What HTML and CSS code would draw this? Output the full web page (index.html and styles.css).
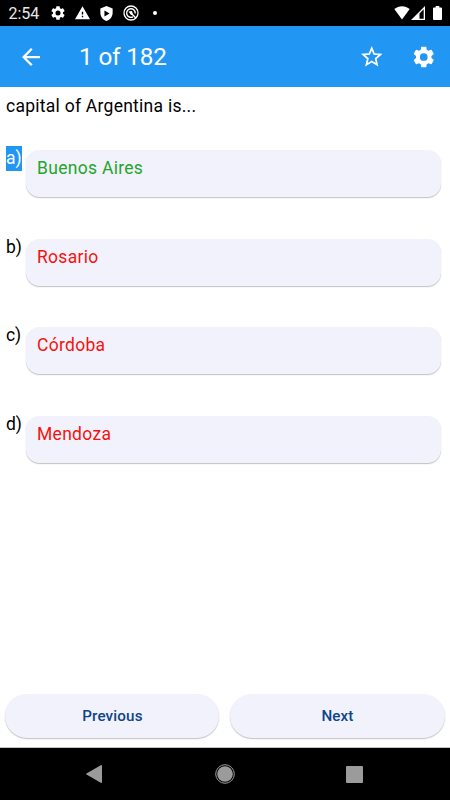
FILE: index.html
```html
<!DOCTYPE html>
<html lang="en">
<head>
<meta charset="utf-8">
<title>Quiz</title>
<link rel="stylesheet" href="styles.css">
</head>
<body>
<div class="screen">
  <div class="status">
    <span class="clock">2:54</span>
    <svg class="s-gear" viewBox="2 2 20 20"><path fill-rule="evenodd" d="M19.14 12.94c.04-.3.06-.61.06-.94 0-.32-.02-.64-.07-.94l2.03-1.58a.49.49 0 0 0 .12-.61l-1.92-3.32a.49.49 0 0 0-.59-.22l-2.39.96c-.5-.38-1.03-.7-1.62-.94l-.36-2.54a.48.48 0 0 0-.48-.41h-3.84c-.24 0-.43.17-.47.41l-.36 2.54c-.59.24-1.13.57-1.62.94l-2.39-.96a.48.48 0 0 0-.59.22L2.74 8.87c-.12.21-.08.47.12.61l2.03 1.58c-.05.3-.09.63-.09.94s.02.64.07.94l-2.03 1.58a.49.49 0 0 0-.12.61l1.92 3.32c.12.22.37.29.59.22l2.39-.96c.5.38 1.03.7 1.62.94l.36 2.54c.05.24.24.41.48.41h3.84c.24 0 .44-.17.47-.41l.36-2.54c.59-.24 1.13-.56 1.62-.94l2.39.96c.22.08.47 0 .59-.22l1.92-3.32a.49.49 0 0 0-.12-.61zM12 15.6A3.6 3.6 0 1 1 12 8.4a3.6 3.6 0 0 1 0 7.2z"/></svg>
    <svg class="s-warn" viewBox="1 2 22 19"><path fill-rule="evenodd" d="M1 21h22L12 2zm12-3h-2v-2h2zm0-4h-2v-4h2z"/></svg>
    <svg class="s-shield" viewBox="3 1 18 22"><path fill-rule="evenodd" d="M12 1 3 4.5V11c0 5.500 3.800 10.700 9 12 5.200-1.300 9-6.500 9-12V4.500zM9 7.500l7.500 4.500L9 16.500z"/></svg>
    <svg class="s-data" viewBox="0 0 16 16"><circle cx="8" cy="8" r="7" fill="none" stroke="#fff" stroke-width="1.300"/><path d="M10 11.800A4.300 4.300 0 1 1 12.200 8.500M7 7l5.800 6" fill="none" stroke="#fff" stroke-width="1.400"/><path d="M5.500 6.500 9 6l1 3.800-2 .2z"/></svg>
    <i class="dot"></i>
    <svg class="s-wifi" viewBox="0 0 16 14"><path d="M0 3.200C4.500-.8 11.500-.8 16 3.200L8 14z"/></svg>
    <svg class="s-cell" viewBox="0 0 14 14"><path fill-rule="evenodd" d="M14 0v14H0zM12.700 3.300 8.500 7.500v5.200h4.200z"/></svg>
    <svg class="s-batt" viewBox="0 0 9 14"><path d="M2.700 0h3.600v1.500H8q1 0 1 1V13q0 1-1 1H1q-1 0-1-1V2.500q0-1 1-1h1.700z"/></svg>
  </div>
  <header class="bar">
    <svg class="back" viewBox="4 4 16 16"><path d="M20 11H7.830l5.590-5.590L12 4l-8 8 8 8 1.410-1.410L7.830 13H20z"/></svg>
    <h1>1 of 182</h1>
    <svg class="star" viewBox="2 2 20 19"><path fill-rule="evenodd" d="m22 9.240-7.190-.62L12 2 9.190 8.630 2 9.240l5.460 4.730L5.820 21 12 17.270 18.180 21l-1.630-7.030zM12 15.400l-3.760 2.270 1-4.280-3.320-2.880 4.380-.38L12 6.100l1.710 4.040 4.380.38-3.320 2.880 1 4.280z"/></svg>
    <svg class="gear" viewBox="2 2 20 20"><path fill-rule="evenodd" d="M19.14 12.94c.04-.3.06-.61.06-.94 0-.32-.02-.64-.07-.94l2.03-1.58a.49.49 0 0 0 .12-.61l-1.92-3.32a.49.49 0 0 0-.59-.22l-2.39.96c-.5-.38-1.03-.7-1.62-.94l-.36-2.54a.48.48 0 0 0-.48-.41h-3.84c-.24 0-.43.17-.47.41l-.36 2.54c-.59.24-1.13.57-1.62.94l-2.39-.96a.48.48 0 0 0-.59.22L2.74 8.87c-.12.21-.08.47.12.61l2.03 1.58c-.05.3-.09.63-.09.94s.02.64.07.94l-2.03 1.58a.49.49 0 0 0-.12.61l1.92 3.32c.12.22.37.29.59.22l2.39-.96c.5.38 1.03.7 1.62.94l.36 2.54c.05.24.24.41.48.41h3.84c.24 0 .44-.17.47-.41l.36-2.54c.59-.24 1.13-.56 1.62-.94l2.39.96c.22.08.47 0 .59-.22l1.92-3.32a.49.49 0 0 0-.12-.61zM12 15.6A3.6 3.6 0 1 1 12 8.400a3.600 3.600 0 0 1 0 7.200z"/></svg>
  </header>
  <main class="quiz">
    <p class="question">capital of Argentina is...</p>
    <div class="option"><span class="letter picked">a)</span><div class="card right">Buenos Aires</div></div>
    <div class="option"><span class="letter">b)</span><div class="card">Rosario</div></div>
    <div class="option"><span class="letter">c)</span><div class="card">Córdoba</div></div>
    <div class="option"><span class="letter">d)</span><div class="card">Mendoza</div></div>
  </main>
  <div class="pager">
    <button>Previous</button>
    <button>Next</button>
  </div>
  <nav class="nav">
    <svg class="n-back" viewBox="0 0 16 18"><path d="M15.200 0q.8 0 .8.800v16.400q0 .8-.8.800L.5 9.600q-.9-.6 0-1.200z"/></svg>
    <svg class="n-home" viewBox="0 0 20 20"><circle cx="10" cy="10" r="9.300" fill="none" stroke="#9b9b9b"/><circle cx="10" cy="10" r="7.800"/></svg>
    <i class="n-recent"></i>
  </nav>
</div>
</body>
</html>
```
FILE: styles.css
```css
* { box-sizing: border-box; }
body { margin: 0; font-family: Roboto, "Liberation Sans", sans-serif; background: #fff; }
.screen { width: 450px; height: 800px; display: flex; flex-direction: column; overflow: hidden; }
svg { display: block; flex: none; fill: #fff; }

.status { height: 26px; flex: none; background: #000; color: #fff; display: flex; align-items: center; padding: 0 8px 0 8.500px; }
.clock { width: 42.500px; font-size: 16px; line-height: 26px; padding-top: 2px; color: #e8e8e8; }
.s-gear { width: 14px; height: 14px; margin-right: 9.500px; }
.s-warn { width: 15px; height: 13.500px; margin-right: 10px; }
.s-shield { width: 13px; height: 15px; margin-right: 10px; }
.s-data { width: 16px; height: 16px; margin-right: 14px; }
.dot { width: 4px; height: 4px; border-radius: 50%; background: #fff; margin-right: auto; }
.s-wifi { width: 16px; height: 13.500px; margin-right: 1px; }
.s-cell { width: 14px; height: 14px; margin-right: 8px; }
.s-batt { width: 9px; height: 14px; }

.bar { height: 61px; flex: none; background: #2196f3; color: #fff; display: flex; align-items: center; padding: 0 15.500px 0 22px; }
.back { width: 18px; height: 18px; }
.bar h1 { margin: 0 auto 0 39px; font-size: 24.300px; font-weight: 400; line-height: 60px; letter-spacing: -.15px; }
.star { width: 21.500px; height: 20.500px; margin-right: 31px; }
.gear { width: 21.500px; height: 22px; }

.quiz { flex: 1; padding: 9px 9.500px 0 6px; font-size: 17.500px; letter-spacing: .3px; line-height: 21px; }
.question { margin: 0 0 33px; color: #000; letter-spacing: .26px; }
.option { display: flex; align-items: flex-start; height: 88.500px; }
.letter { flex: none; width: 15.800px; margin-right: 4.200px; margin-top: -4px; line-height: 25px; letter-spacing: -.1px; color: #000; }
.picked { background: #2196f3; color: #fff; }
.card { flex: 1; height: 47px; padding: 8px 11px; border-radius: 13.500px; background: #f1f2fb; color: #f4130f; box-shadow: 0 1px 1px rgba(0,0,0,.2), 0 1px 2px rgba(0,0,0,.06); }
.right { color: #25a52b; }

.pager { display: flex; gap: 11px; padding: 0 5.500px 9.500px 5.400px; border-bottom: 1px solid #c4c4c4; }
.pager button { flex: 1; height: 43.500px; border: 0; border-radius: 22px; background: #f1f2fb; color: #0f4486; font: 500 15.200px Roboto, sans-serif; letter-spacing: .15px; padding: 0; box-shadow: 0 1px 1px rgba(0,0,0,.18), 0 1px 2px rgba(0,0,0,.08); }

.nav { height: 52px; flex: none; background: #000; display: flex; align-items: center; justify-content: space-between; padding: 0 87px 0 86px; }
.nav svg { fill: #9b9b9b; }
.n-back { width: 16px; height: 18px; }
.n-home { width: 20px; height: 20px; margin-left: 1px; }
.n-recent { width: 17px; height: 17px; border-radius: 1px; background: #9b9b9b; }
```
